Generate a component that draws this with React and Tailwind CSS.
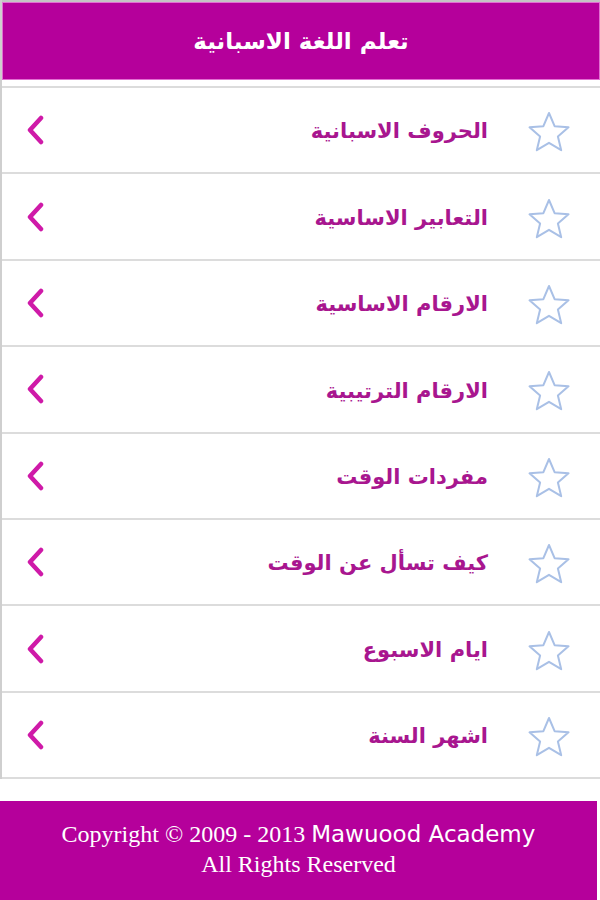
import React from 'react';

const items = [
  'الحروف الاسبانية',
  'التعابير الاساسية',
  'الارقام الاساسية',
  'الارقام الترتيبية',
  'مفردات الوقت',
  'كيف تسأل عن الوقت',
  'ايام الاسبوع',
  'اشهر السنة',
];

const Star = () => (
  <svg width="46" height="44" viewBox="0 0 46 44" fill="none">
    <path
      d="M23 3 L28.6 16.2 L42.5 17.3 L31.9 26.4 L35.2 40.2 L23 32.8 L10.8 40.2 L14.1 26.4 L3.5 17.3 L17.4 16.2 Z"
      stroke="#a9c0e6"
      strokeWidth="2"
      strokeLinejoin="round"
      fill="white"
    />
  </svg>
);

const Chevron = () => (
  <svg width="20" height="30" viewBox="0 0 20 30" fill="none">
    <path d="M16 3 L5 15 L16 27" stroke="#cf1aa8" strokeWidth="4.5" strokeLinecap="round" strokeLinejoin="round" />
  </svg>
);

const App = () => {
  return (
    <div className="w-[600px] h-[900px] bg-white flex flex-col overflow-hidden" style={{ fontFamily: '"DejaVu Sans", sans-serif' }}>
      <div className="border-l-2 border-[#cfcfcf]">
        <div className="h-[2px] bg-[#c4c4c4]" />
        <div className="h-[78px] bg-[#b5009b] border border-[#e26fd2] flex items-center justify-center">
          <span dir="rtl" className="text-white font-bold text-[23px]">تعلم اللغة الاسبانية</span>
        </div>
        <div className="h-[6px]" />
        <div className="border-t-2 border-[#dcdcdc]">
          {items.map((item, i) => (
            <div key={i} className="h-[86.4px] border-b-2 border-[#dcdcdc] flex items-center">
              <div className="w-[60px] flex justify-center pl-[6px]">
                <Chevron />
              </div>
              <div className="flex-1 flex justify-end pr-[10px] pt-[4px]">
                <span dir="rtl" className="text-[#a8168f] font-bold text-[21px]">{item}</span>
              </div>
              <div className="w-[102px] flex justify-center pt-[4px]">
                <Star />
              </div>
            </div>
          ))}
        </div>
      </div>
      <div className="h-[22px]" />
      <div className="w-[597px] flex-1 bg-[#b5009b] flex flex-col items-center justify-center text-white pb-[4px]">
        <div className="text-[24px] leading-[30px]">
          <span style={{ fontFamily: '"Liberation Serif", serif' }}>Copyright © 2009 - 2013 </span>
          <span style={{ fontFamily: '"DejaVu Sans", sans-serif' }} className="text-[23px]">Mawuood Academy</span>
        </div>
        <div className="text-[24px] leading-[30px]" style={{ fontFamily: '"Liberation Serif", serif' }}>All Rights Reserved</div>
      </div>
    </div>
  );
};

export default App;
